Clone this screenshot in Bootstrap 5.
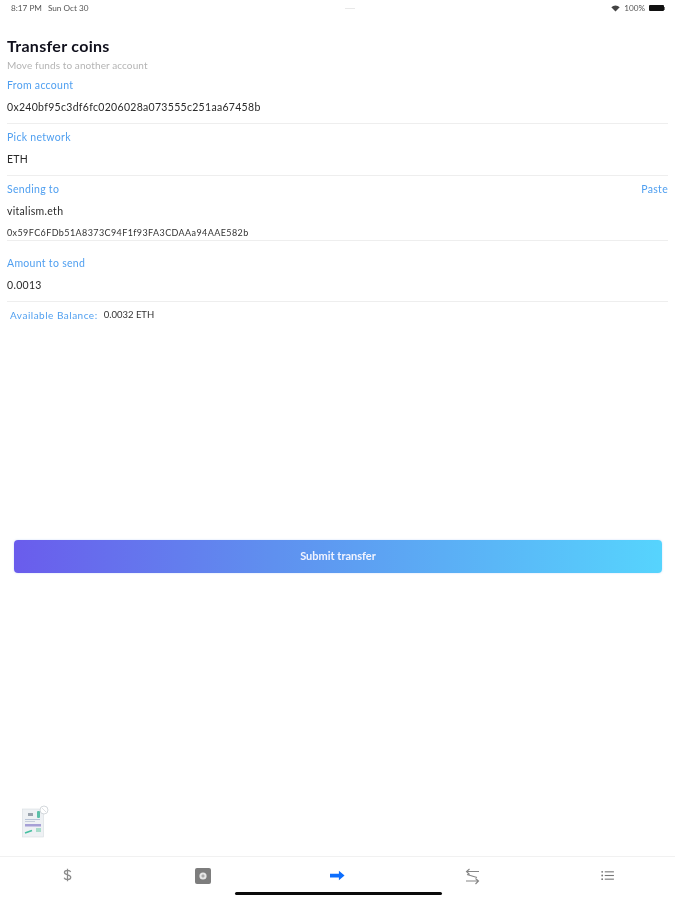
<!DOCTYPE html>
<html lang="en">
<head>
<meta charset="utf-8">
<title>Transfer coins</title>
<link href="https://cdn.jsdelivr.net/npm/bootstrap@5.3.0/dist/css/bootstrap.min.css" rel="stylesheet">
<style>
html,body{height:100%;}
body{font-family:"Lato","Open Sans","Liberation Sans",sans-serif;background:#fff;color:#222;}
.app-shell{height:900px;position:relative;overflow:hidden;filter:blur(.4px);}
.status-row{height:17px;padding:0 10px 0 11px;font-size:8.2px;color:#555;}
.status-row .status-gap{gap:6px;}
.grabber{width:10px;height:1px;background:#e8e8e8;}
.batt{width:15px;height:6px;background:#111;border-radius:1px;}
.batt-tip{width:1px;height:3px;background:#777;}
.pad-main{padding:0 7px;}
.page-title{font-size:16px;font-weight:700;color:#10101c;line-height:20px;margin:19px 0 0;letter-spacing:.3px;}
.page-sub{font-size:10px;color:#b4b4b4;line-height:12px;margin:3px 0 0;letter-spacing:.1px;}
.field-label{font-size:10.5px;color:#4f9ff0;line-height:14px;letter-spacing:.3px;}
.field-value{font-size:10.5px;color:#2a2a2a;line-height:14px;margin-top:8px;letter-spacing:.3px;}
.field-sub{font-size:9px;color:#333;line-height:10px;margin-top:10px;letter-spacing:.4px;}
.field-block{border-bottom:1px solid #eeeeee;}
.fb-a{padding-top:6px;height:52px;}
.fb-first{height:53px;padding-top:7px;}
.fb-c{height:65px;padding-top:6px;}
.fb-d{height:61px;padding-top:15px;}
.bal-row{padding:7px 3px;line-height:12px;gap:6px;}
.bal-label{color:#4f9ff0;font-size:10px;letter-spacing:.5px;}
.bal-value{color:#333;font-size:9.5px;}
.submit-btn{margin:212px 13px 0 14px;width:648px;height:33px;border:0;border-radius:4px;background:linear-gradient(90deg,#6a5cec 0%,#5f90ef 40%,#56d4fd 100%);color:#f2f4ff;font-size:11px;font-weight:700;box-shadow:0 0 2px rgba(90,140,240,.35);}
.doc-art{margin:232px 0 0 22px;width:27px;height:33px;}
.tab-strip{margin-top:18px;height:44px;border-top:1px solid #f1f1f1;}
.tab-slot{width:135px;padding-top:11px;}
.icon-nudge{margin-top:2px;}
.home-bar{position:absolute;left:235px;top:892px;width:207px;height:3px;background:#0b0b0b;border-radius:2px;}
</style>
</head>
<body>
<div class="app-shell d-flex flex-column">
  <div class="status-row d-flex align-items-center justify-content-between">
    <div class="d-flex status-gap"><span>8:17 PM</span><span>Sun Oct 30</span></div>
    <div class="grabber"></div>
    <div class="d-flex align-items-center gap-1">
      <svg width="9" height="7" viewBox="0 0 9 7"><path d="M4.5 6.5 0.3 2.2A6 6 0 0 1 8.7 2.2Z" fill="#444"/></svg>
      <span>100%</span>
      <div class="d-flex align-items-center"><div class="batt"></div><div class="batt-tip"></div></div>
    </div>
  </div>
  <div class="pad-main">
    <h1 class="page-title">Transfer coins</h1>
    <p class="page-sub">Move funds to another account</p>
    <div class="field-block fb-first">
      <div class="field-label">From account</div>
      <div class="field-value">0x240bf95c3df6fc0206028a073555c251aa67458b</div>
    </div>
    <div class="field-block fb-a">
      <div class="field-label">Pick network</div>
      <div class="field-value">ETH</div>
    </div>
    <div class="field-block fb-c">
      <div class="d-flex justify-content-between"><span class="field-label">Sending to</span><span class="field-label">Paste</span></div>
      <div class="field-value">vitalism.eth</div>
      <div class="field-sub">0x59FC6FDb51A8373C94F1f93FA3CDAAa94AAE582b</div>
    </div>
    <div class="field-block fb-d">
      <div class="field-label">Amount to send</div>
      <div class="field-value">0.0013</div>
    </div>
    <div class="bal-row d-flex align-items-center"><span class="bal-label">Available Balance:</span><span class="bal-value">0.0032 ETH</span></div>
  </div>
  <button type="button" class="btn submit-btn p-0">Submit transfer</button>
  <svg class="doc-art" viewBox="0 0 27 33" aria-hidden="true">
    <rect x="0.5" y="4" width="21" height="28" fill="#eef1f4" stroke="#d8dde0" stroke-width=".6"/>
    <rect x="6" y="8" width="5" height="3" fill="#9aa3ad"/>
    <rect x="15" y="6" width="3" height="7" rx="1" fill="#5cbfa8"/>
    <rect x="3" y="14" width="15" height="1" fill="#b8c4d8"/>
    <rect x="3" y="16" width="10" height="1" fill="#c6cedb"/>
    <rect x="3" y="19" width="16" height="2.5" fill="#a6a0d6"/>
    <path d="M3 28 10 25.5" stroke="#45bfa0" stroke-width="1.6" fill="none"/>
    <rect x="14" y="23" width="5" height="4" fill="#a8dccb"/>
    <circle cx="22" cy="5" r="4" fill="#fff" stroke="#c9ced3" stroke-width=".8"/>
    <path d="M20 3 24 7" stroke="#d5d9dd" stroke-width=".8"/>
  </svg>
  <div class="tab-strip d-flex">
    <div class="tab-slot d-flex justify-content-center">
      <svg width="9" height="14" viewBox="0 0 10 15" fill="none" stroke="#8b8b8b" stroke-width="1.4"><path d="M8.5 4.2C8 2.8 6.5 2.4 5 2.4 3 2.4 1.6 3.3 1.6 4.8 1.6 8 8.6 6.5 8.6 10 8.6 11.6 7 12.6 5 12.6 3.2 12.6 1.8 12 1.3 10.6M5 .5V14.5"/></svg>
    </div>
    <div class="tab-slot d-flex justify-content-center">
      <svg width="16" height="16" viewBox="0 0 16 16"><rect width="16" height="16" rx="2" fill="#7d7d7d"/><circle cx="8" cy="8" r="3.6" fill="#e6e6e6"/><path d="M8 6.3V9.7M6.3 8H9.7" stroke="#8a8a8a" stroke-width=".8"/></svg>
    </div>
    <div class="tab-slot d-flex justify-content-center">
      <svg width="15" height="11" viewBox="0 0 16 11" class="icon-nudge"><path d="M0 3.5H9.5V0.5L15.5 5.5 9.5 10.5V7.5H0Z" fill="#0d6efd"/></svg>
    </div>
    <div class="tab-slot d-flex justify-content-center">
      <svg width="17" height="17" viewBox="0 0 17 17" fill="none" stroke="#858585" stroke-width="1.1"><path d="M15 3.5H3M5.5 1 2.5 3.5 5.5 6.5M3 6.5 13 9.5M2 13H14M11.5 10.5 14.5 13 11.5 16"/></svg>
    </div>
    <div class="tab-slot d-flex justify-content-center">
      <svg width="13" height="11" viewBox="0 0 14 12" class="icon-nudge" fill="#777"><circle cx="1.2" cy="2" r="1"/><circle cx="1.2" cy="6" r="1"/><circle cx="1.2" cy="10" r="1"/><rect x="4" y="1.4" width="10" height="1.2"/><rect x="4" y="5.4" width="10" height="1.2"/><rect x="4" y="9.4" width="10" height="1.2"/></svg>
    </div>
  </div>
  <div class="home-bar"></div>
</div>
<script src="https://cdn.jsdelivr.net/npm/bootstrap@5.3.0/dist/js/bootstrap.bundle.min.js"></script>
</body>
</html>
